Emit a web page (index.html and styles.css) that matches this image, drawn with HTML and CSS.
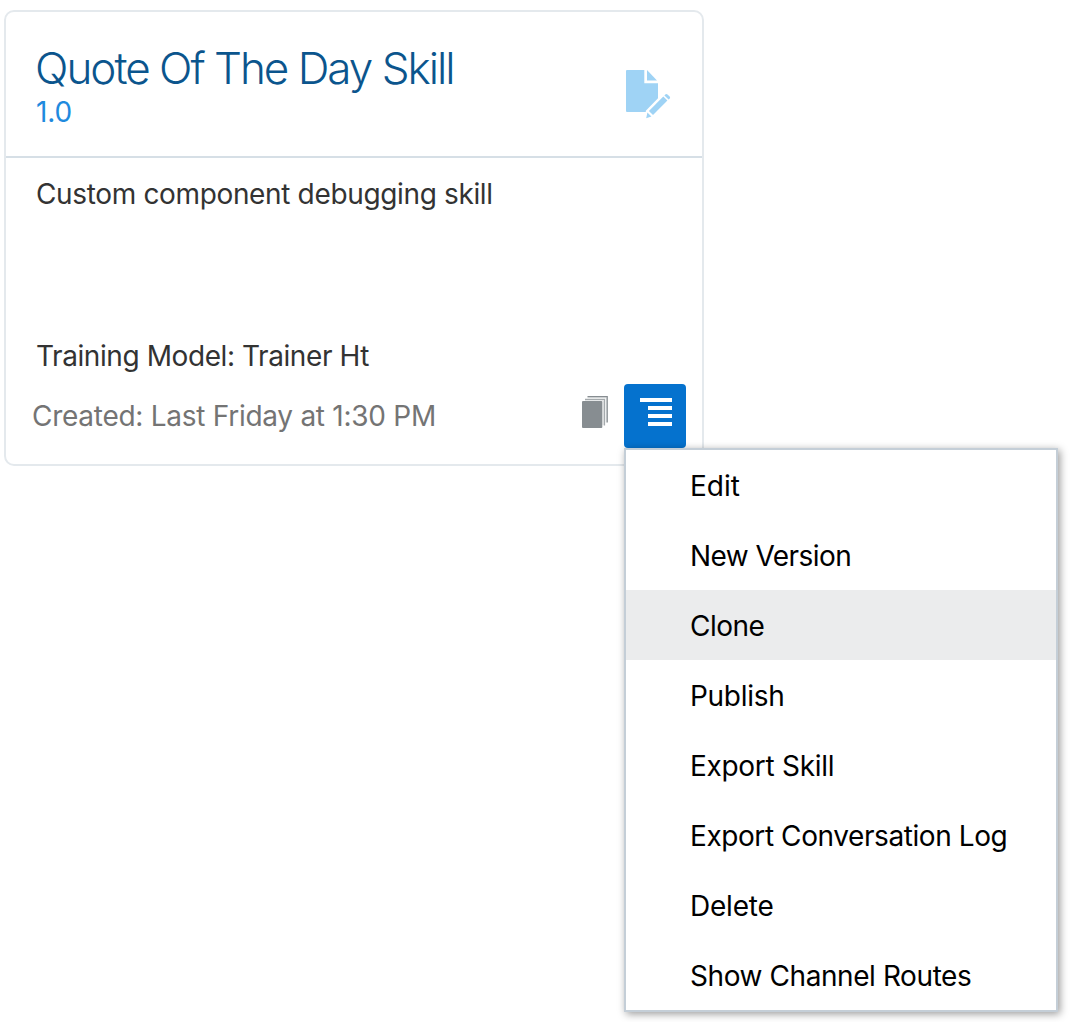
FILE: index.html
```html
<!DOCTYPE html>
<html lang="en">
<head>
<meta charset="utf-8">
<title>Skills</title>
<link rel="stylesheet" href="styles.css">
</head>
<body>
<article class="card">
  <header class="card-header">
    <div class="heading">
      <h1 class="title">Quote Of The Day Skill</h1>
      <span class="version">1.0</span>
    </div>
    <svg class="draft-icon" width="46" height="50" viewBox="0 0 46 50" aria-hidden="true">
      <path d="M1 0H18.3V13.2H32V28.3L19.8 40.8V42H1Q0 42 0 41V1Q0 0 1 0Z"/>
      <path d="M21 0L31 10.4H21Z"/>
      <path d="M37.3 26.6L41.4 30.4L27 45L22.9 41Z"/>
      <path d="M38.4 25.4L39.6 24.3Q40.5 23.6 41.5 24.5L43.6 26.6Q44.5 27.6 43.8 28.4L42.6 29.5Z"/>
      <path d="M21.4 42.6L25.4 46.4L20.2 48.2Z"/>
    </svg>
  </header>
  <div class="card-body">
    <p class="description">Custom component debugging skill</p>
    <p class="model">Training Model: Trainer Ht</p>
    <footer class="card-footer">
      <span class="created">Created: Last Friday at 1:30 PM</span>
      <svg class="versions-icon" width="26" height="32" viewBox="0 0 26 32" aria-hidden="true">
        <path class="page-gap" d="M5.5 1.6H24.2V26.5M3 4.6H21V29"/>
        <path class="page-back" d="M5.5 .5H25.2V26.5"/>
        <path class="page-middle" d="M3 3.4H22.4V29.5"/>
        <rect class="page-front" x="0" y="5" width="20.3" height="27" rx="1"/>
      </svg>
      <div class="actions">
        <button class="menu-button" aria-label="Options">
          <svg width="32" height="28" viewBox="0 0 32 28" aria-hidden="true">
            <path d="M0 0H32V4H0ZM8 8H32V12H8ZM8 16H32V20H8ZM8 24H32V28H8Z"/>
          </svg>
        </button>
        <ul class="menu">
          <li class="item"><span class="edit">Edit</span></li>
          <li class="item"><span class="new-version">New Version</span></li>
          <li class="item active"><span class="clone">Clone</span></li>
          <li class="item"><span class="publish">Publish</span></li>
          <li class="item"><span class="export-skill">Export Skill</span></li>
          <li class="item"><span class="export-log">Export Conversation Log</span></li>
          <li class="item"><span class="delete">Delete</span></li>
          <li class="item"><span class="routes">Show Channel Routes</span></li>
        </ul>
      </div>
    </footer>
  </div>
</article>
</body>
</html>
```
FILE: styles.css
```css
* { box-sizing: border-box; }

body {
  margin: 0;
  padding: 10px 4px;
  height: 1022px;
  overflow: hidden;
  background: #fff;
  font-family: Inter, "Liberation Sans", sans-serif;
  font-size: 28px;
  line-height: 34px;
  color: #333;
}

.card {
  width: 700px;
  height: 456px;
  border: 2px solid #e4e9ed;
  border-radius: 10px;
  display: flex;
  flex-direction: column;
}

.card-header {
  height: 146px;
  flex: none;
  border-bottom: 2px solid #d6dfe6;
  display: flex;
  justify-content: space-between;
  padding: 29px 30px 0;
}

.title {
  margin: 0 0 0 -1px;
  font-size: 44px;
  font-weight: 350;
  line-height: 54px;
  letter-spacing: -2px;
  color: #0b558d;
  white-space: nowrap;
}

.version {
  display: block;
  color: #1f8ade;
  font-weight: 380;
  letter-spacing: -.1px;
}

.draft-icon { margin-top: 29px; fill: #9fd3f5; }

.card-body {
  flex: 1;
  display: flex;
  flex-direction: column;
  padding: 19px 16px 0 30px;
}

.description { margin: 0; height: 162px; letter-spacing: -.35px; }

.model { margin: 0; height: 45px; letter-spacing: -.42px; }

.card-footer {
  display: flex;
  align-items: flex-start;
  margin-left: -4px;
}

.created { color: #747474; flex: 1; padding-top: 15px; letter-spacing: -.27px; }

.versions-icon { margin: 12px 16px 0 0; }
.page-front { fill: #878d91; }
.page-middle { fill: none; stroke: #a5aaad; stroke-width: 1.4; }
.page-back { fill: none; stroke: #878d91; stroke-width: 1.3; }
.page-gap { fill: none; stroke: #e3e5e6; stroke-width: 1; }

.actions { position: relative; }

.menu-button {
  display: flex;
  width: 62px;
  height: 64px;
  padding: 14px 0 0 16px;
  border: 0;
  border-radius: 4px;
  background: #0572ce;
}

.menu-button svg { fill: #fff; }

.menu {
  position: absolute;
  top: 64px;
  left: 0;
  width: 434px;
  margin: 0;
  padding: 0;
  list-style: none;
  background: #fff;
  border: 2px solid #c4ced7;
  box-shadow: 2px 2px 8px rgba(0, 0, 0, .4);
  color: #000;
}

.item {
  height: 70px;
  padding: 19px 0 0 64px;
  white-space: nowrap;
}

.item.active { background: #ebeced; }

.new-version { letter-spacing: -.55px; }
.clone { letter-spacing: -.5px; }
.publish { letter-spacing: -.3px; }
.export-skill { letter-spacing: -.3px; }
.export-log { letter-spacing: -.42px; }
.delete { letter-spacing: -.22px; }
.routes { letter-spacing: -.42px; }
```
